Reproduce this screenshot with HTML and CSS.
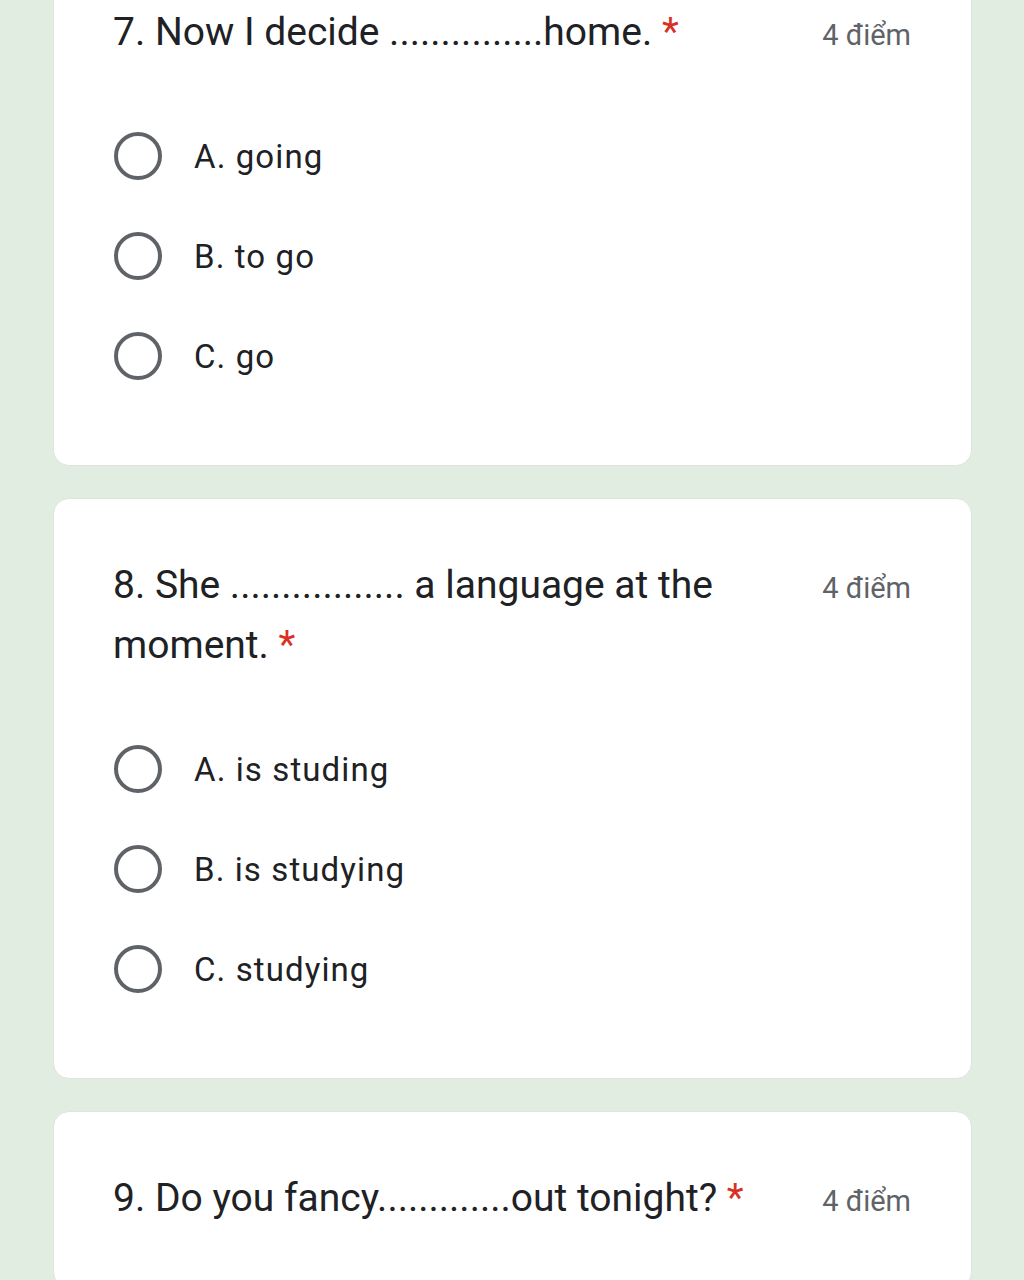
FILE: index.html
```html
<!DOCTYPE html>
<html lang="vi">
<head>
<meta charset="utf-8">
<title>Form</title>
<link rel="stylesheet" href="styles.css">
</head>
<body>
<main class="page">
  <section class="card card-first">
    <div class="q-head">
      <div class="q-title">7. Now I decide ...............home. <span class="req">*</span></div>
      <div class="q-points">4 điểm</div>
    </div>
    <div class="options">
      <div class="option"><span class="radio"></span><span class="opt-label">A. going</span></div>
      <div class="option"><span class="radio"></span><span class="opt-label">B. to go</span></div>
      <div class="option"><span class="radio"></span><span class="opt-label">C. go</span></div>
    </div>
  </section>

  <section class="card">
    <div class="q-head">
      <div class="q-title">8. She ................. a language at the moment. <span class="req">*</span></div>
      <div class="q-points">4 điểm</div>
    </div>
    <div class="options">
      <div class="option"><span class="radio"></span><span class="opt-label">A. is studing</span></div>
      <div class="option"><span class="radio"></span><span class="opt-label">B. is studying</span></div>
      <div class="option"><span class="radio"></span><span class="opt-label">C. studying</span></div>
    </div>
  </section>

  <section class="card">
    <div class="q-head">
      <div class="q-title">9. Do you fancy.............out tonight? <span class="req">*</span></div>
      <div class="q-points">4 điểm</div>
    </div>
  </section>
</main>
</body>
</html>
```
FILE: styles.css
```css
html, body {
  margin: 0;
  padding: 0;
  background: #e1ede0;
}

.page {
  padding: 0 52px 0 53px;
  display: flex;
  flex-direction: column;
  gap: 32px;
  height: 1280px;
  overflow: hidden;
  font-family: Roboto, "Noto Sans", sans-serif;
  color: #202124;
}

.card {
  background: #ffffff;
  border: 1px solid #dfe5de;
  border-radius: 16px;
  padding: 56px 60px 59px 59px;
  flex-shrink: 0;
}

.card-first {
  border-top: none;
  border-top-left-radius: 0;
  border-top-right-radius: 0;
  padding-top: 2px;
  padding-bottom: 59px;
}

.q-head {
  display: flex;
  align-items: baseline;
  gap: 40px;
}

.q-title {
  flex: 1;
  font-size: 39px;
  line-height: 60px;
  letter-spacing: 0;
  color: #202124;
}

.req {
  color: #d93025;
}

.q-points {
  font-size: 29px;
  color: #5f6368;
  white-space: nowrap;
}

.options {
  margin-top: 44px;
  display: flex;
  flex-direction: column;
}

.option {
  height: 100px;
  display: flex;
  align-items: center;
  gap: 32px;
}

.radio {
  width: 40px;
  height: 40px;
  border: 4px solid #5f6368;
  border-radius: 50%;
  flex-shrink: 0;
  margin-left: 1px;
}

.opt-label {
  font-size: 33px;
  letter-spacing: 1.1px;
  color: #202124;
}
```
